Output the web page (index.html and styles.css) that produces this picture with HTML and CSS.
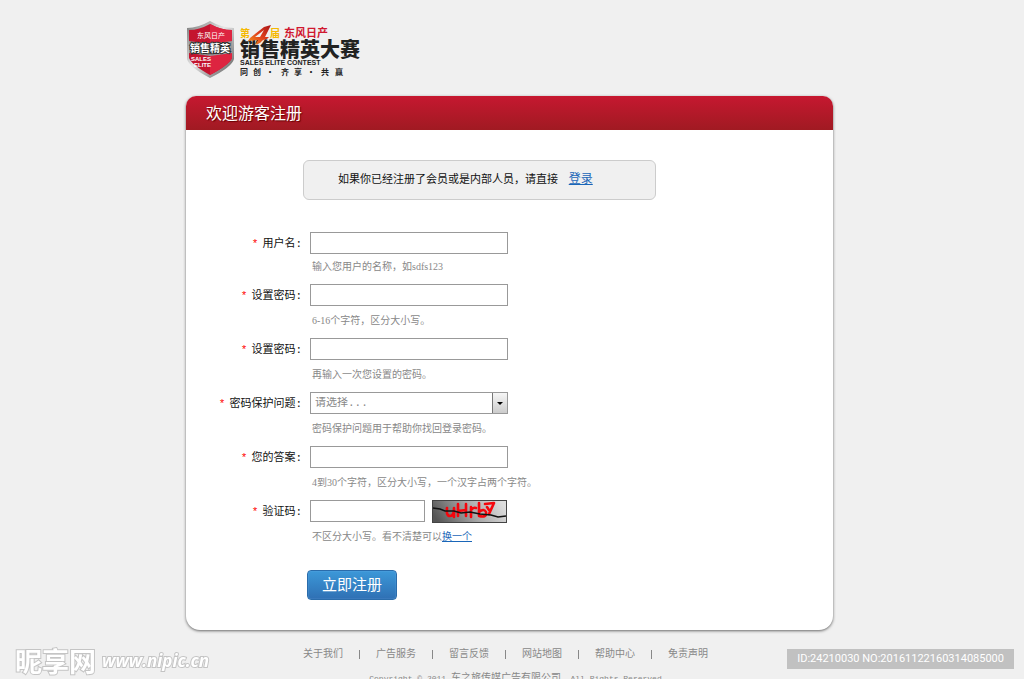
FILE: index.html
```html
<!DOCTYPE html>
<html lang="zh-CN">
<head>
    <meta charset="UTF-8">
    <meta name="viewport" content="width=device-width, initial-scale=1.0">
    <title>欢迎游客注册</title>
    <link rel="stylesheet" href="styles.css">
</head>
<body>

    <div class="wrapper">
        <header class="logo">
            <svg width="180" height="60" viewBox="0 0 180 60" role="img" aria-label="销售精英大赛">
                <defs>
                    <linearGradient id="steel" x1="0" y1="0" x2="1" y2="1">
                        <stop offset="0" stop-color="#777"/>
                        <stop offset="0.45" stop-color="#e6e6e6"/>
                        <stop offset="1" stop-color="#555"/>
                    </linearGradient>
                    <linearGradient id="flame" x1="0" y1="1" x2="1" y2="0">
                        <stop offset="0" stop-color="#f59a1c"/>
                        <stop offset="0.5" stop-color="#e0401c"/>
                        <stop offset="1" stop-color="#a81418"/>
                    </linearGradient>
                </defs>
                <path d="M24 1 Q36 8 48 8 V39 Q46 47 24 58 Q3 47 1 39 V8 Q12 8 24 1Z" fill="url(#steel)"/>
                <path d="M24 4 Q35 10 46 10 V38 Q43 45 24 55 Q6 45 3 38 V10 Q13 10 24 4Z" fill="#c4142f"/>
                <path d="M24 4 Q35 10 46 10 V38 Q43 45 24 55Z" fill="#dd2440"/>
                <path d="M3 21 L24 24 L46 21 V33 L24 36 L3 33Z" fill="#999"/>
                <text class="shield-name" x="11" y="18">东风日产</text>
                <text class="shield-main" x="4" y="32">销售精英</text>
                <text class="shield-en" x="5" y="41">SALES</text>
                <text class="shield-en" x="8" y="47">ELITE</text>

                <text class="logo-yellow" x="54" y="17">第</text>
                <text class="logo-yellow" x="84" y="17">届</text>
                <text class="logo-red" x="98" y="17">东风日产</text>
                <text class="logo-main" x="54" y="37">销售精英大赛</text>
                <path d="M85 5 L78 7 L64 18 L62 21 L72 20 L69 25 L74 23 L77 20 L81 19 L83 17 L79 17 L84 7Z M78 10 L74 17 L69 17Z" fill="url(#flame)" fill-rule="evenodd"/>
                <text class="logo-en" x="54" y="45">SALES ELITE CONTEST</text>
                <text class="logo-slogan" y="55" x="54 67 80 95 108 121 135 149">同创·齐享·共赢</text>
            </svg>
        </header>

        <main class="panel">
            <h1 class="panel-title">欢迎游客注册</h1>
            <div class="panel-body">
                <p class="notice">如果你已经注册了会员或是内部人员，请直接 <a href="#">登录</a></p>

                <form class="form">
                    <div class="row">
                        <label for="username"><span class="star">*</span>用户名:</label>
                        <div class="field">
                            <input type="text" id="username">
                            <p class="hint hint-short">输入您用户的名称，如sdfs123</p>
                        </div>
                    </div>
                    <div class="row">
                        <label for="password"><span class="star">*</span>设置密码:</label>
                        <div class="field">
                            <input type="password" id="password">
                            <p class="hint">6-16个字符，区分大小写。</p>
                        </div>
                    </div>
                    <div class="row">
                        <label for="confirm"><span class="star">*</span>设置密码:</label>
                        <div class="field">
                            <input type="password" id="confirm">
                            <p class="hint">再输入一次您设置的密码。</p>
                        </div>
                    </div>
                    <div class="row">
                        <label for="question"><span class="star">*</span>密码保护问题:</label>
                        <div class="field">
                            <div class="select-box">
                                <select id="question">
                                    <option>请选择...</option>
                                </select>
                                <span class="arrow"></span>
                            </div>
                            <p class="hint">密码保护问题用于帮助你找回登录密码。</p>
                        </div>
                    </div>
                    <div class="row">
                        <label for="answer"><span class="star">*</span>您的答案:</label>
                        <div class="field">
                            <input type="text" id="answer">
                            <p class="hint">4到30个字符，区分大小写，一个汉字占两个字符。</p>
                        </div>
                    </div>
                    <div class="row">
                        <label for="code"><span class="star">*</span>验证码:</label>
                        <div class="field">
                            <div class="code-group">
                                <input type="text" id="code">
                                <svg class="captcha" width="75" height="23" viewBox="0 0 75 23" role="img" aria-label="验证码">
                                    <defs>
                                        <linearGradient id="noise" x1="0" y1="0.6" x2="1" y2="0.4">
                                            <stop offset="0" stop-color="#555"/>
                                            <stop offset="0.55" stop-color="#aaa"/>
                                            <stop offset="1" stop-color="#ddd"/>
                                        </linearGradient>
                                    </defs>
                                    <rect x="0.5" y="0.5" width="74" height="22" fill="url(#noise)" stroke="#444"/>
                                    <g fill="none" stroke="#f5050c" stroke-width="2.6" stroke-linecap="round" stroke-linejoin="round">
                                        <path d="M15 8 Q14 16 18 16 Q22 16 22 8 V17"/>
                                        <path d="M26 4 V16 M34 4 V16 M26 11 L34 10"/>
                                        <path d="M39 7 V17 M39 10 Q41 7 44 8"/>
                                        <path d="M47 3 V16 Q55 18 54 12 Q52 8 47 12"/>
                                        <path d="M53 4 L62 3 L57 14 M55 7 L57 10"/>
                                    </g>
                                    <path d="M1 8 L8 9 L13 11 L22 11 L29 13 L38 12 L48 14 L59 15 L66 17 L74 16" fill="none" stroke="#111" stroke-width="1.5"/>
                                </svg>
                            </div>
                            <p class="hint">不区分大小写。看不清楚可以<a href="#">换一个</a></p>
                        </div>
                    </div>
                    <button type="submit">立即注册</button>
                </form>
            </div>
        </main>

        <footer class="footer">
            <nav class="links">
                <a href="#">关于我们</a>
                <a href="#">广告服务</a>
                <a href="#">留言反馈</a>
                <a href="#">网站地图</a>
                <a href="#">帮助中心</a>
                <a href="#">免责声明</a>
            </nav>
            <p class="copyright"><span class="en">Copyright © 2011 </span>车之旅传媒广告有限公司<span class="en">. All Rights Reserved</span></p>
        </footer>
    </div>

    <div class="watermark">
        <span class="mark-name">昵享网</span>
        <span class="mark-site">www.nipic.cn</span>
    </div>
    <div class="image-id">ID:24210030 NO:20161122160314085000</div>

</body>
</html>
```

FILE: styles.css
```css
* {
    box-sizing: border-box;
}

body {
    margin: 0;
    padding: 20px 5px 0 0;
    background: #f0f0f0;
    font-family: "Liberation Serif", "Noto Sans CJK SC", sans-serif;
    font-size: 12px;
    color: #111;
}

p, h1 {
    margin: 0;
}

a {
    color: #1a66b8;
}

.wrapper {
    width: 100%;
    max-width: 647px;
    margin: 0 auto;
}

/* logo */
.logo {
    height: 76px;
}

.logo svg {
    display: block;
}

.logo text {
    font-family: "Liberation Sans", "Noto Sans CJK SC", sans-serif;
    font-weight: bold;
    fill: #222;
}

.logo .shield-name {
    font-size: 7px;
    font-weight: normal;
    fill: #fff;
}

.logo .shield-main {
    font-size: 10px;
    fill: #fff;
    stroke: #333;
    stroke-width: 2px;
    paint-order: stroke;
}

.logo .shield-en {
    font-size: 6px;
    fill: #fff;
}

.logo .logo-yellow {
    font-size: 10px;
    fill: #f5b800;
}

.logo .logo-red {
    font-size: 11px;
    fill: #d01830;
}

.logo .logo-main {
    font-size: 20px;
    font-weight: 900;
}

.logo .logo-en {
    font-size: 7px;
}

.logo .logo-slogan {
    font-family: "Noto Sans CJK SC", sans-serif;
    font-size: 8px;
}

/* panel */
.panel {
    background: #fff;
    border-radius: 10px 10px 14px 14px;
    box-shadow: 0 1px 3px #666;
}

.panel-title {
    height: 34px;
    padding-left: 20px;
    border-radius: 10px 10px 0 0;
    background: linear-gradient(#c61830, #a01a22);
    color: #fff;
    font-family: "Noto Sans CJK SC", sans-serif;
    font-size: 16px;
    font-weight: normal;
    line-height: 32px;
    text-shadow: 1px 1px 1px #600;
}

.panel-body {
    padding: 30px 0;
}

.notice {
    width: 353px;
    max-width: 100%;
    margin: 0 0 32px 117px;
    padding: 0 0 2px 34px;
    border: 1px solid #ccc;
    border-radius: 6px;
    background: #f0f0f0;
    font-size: 11px;
    line-height: 36px;
}

.notice a {
    margin-left: 8px;
    font-size: 12px;
}

/* form */
.row {
    display: grid;
    grid-template-columns: 116px 1fr;
    column-gap: 8px;
    margin-bottom: 2px;
}

.row label {
    font-family: "Liberation Mono", "Noto Sans CJK SC", monospace;
    font-size: 11px;
    line-height: 24px;
    text-align: right;
}

.star {
    margin-right: 4px;
    color: #f00;
}

input, select {
    display: block;
    width: 198px;
    height: 22px;
    padding: 0 4px;
    border: 1px solid #999;
    border-radius: 0;
    background: #fff;
    font-family: "Liberation Mono", "Noto Sans CJK SC", monospace;
    font-size: 11px;
}

.select-box {
    position: relative;
    width: 198px;
}

select {
    appearance: none;
    color: #888;
}

.arrow {
    position: absolute;
    top: 1px;
    right: 1px;
    width: 15px;
    height: 20px;
    border-left: 1px solid #777;
    background: linear-gradient(#f6f6f6, #ccc);
    pointer-events: none;
}

.arrow::after {
    content: "";
    position: absolute;
    top: 9px;
    left: 4px;
    border: 3px solid transparent;
    border-top-color: #000;
}

.hint {
    padding-left: 2px;
    color: #888;
    font-size: 10px;
    line-height: 30px;
}

.hint-short {
    height: 28px;
    line-height: 26px;
}

.code-group {
    display: flex;
    height: 22px;
    gap: 7px;
}

.code-group input {
    width: 115px;
}

button {
    display: block;
    width: 90px;
    height: 30px;
    margin: 18px 0 0 121px;
    padding: 0 0 2px;
    border: 1px solid #2a6cab;
    border-radius: 4px;
    background: linear-gradient(#3c98d8, #2f70b4);
    box-shadow: inset 0 0 1px #9cf;
    color: #fff;
    font-family: "Noto Sans CJK SC", sans-serif;
    font-size: 15px;
    line-height: 26px;
    cursor: pointer;
}

/* footer */
.footer {
    padding-top: 14px;
    color: #888;
    font-size: 10px;
    line-height: 20px;
    text-align: center;
}

.links {
    display: flex;
    justify-content: center;
    padding-right: 8px;
}

.links a {
    display: flex;
    align-items: center;
    color: #888;
    text-decoration: none;
}

.links a + a::before {
    content: "";
    width: 1px;
    height: 9px;
    margin: 0 16px;
    background: #888;
}

.copyright {
    padding: 4px 0 0 12px;
}

.en {
    font-family: "Liberation Mono", monospace;
    font-size: 8px;
    white-space: pre;
}

/* marks over the page corners */
.watermark {
    position: fixed;
    left: 15px;
    bottom: 4px;
    display: flex;
    align-items: center;
    gap: 6px;
    color: #fff;
    font-weight: bold;
    line-height: 28px;
    -webkit-text-stroke: 2px #c4c4c4;
    paint-order: stroke;
}

.mark-name {
    font-family: "Noto Sans CJK SC", sans-serif;
    font-size: 27px;
}

.mark-site {
    font-family: "Open Sans", sans-serif;
    font-size: 17px;
    font-style: italic;
}

.image-id {
    position: fixed;
    right: 10px;
    bottom: 10px;
    padding: 0 10px;
    background: #c1c1c1;
    color: #fff;
    font-family: Roboto, sans-serif;
    font-size: 11px;
    line-height: 20px;
}
```
